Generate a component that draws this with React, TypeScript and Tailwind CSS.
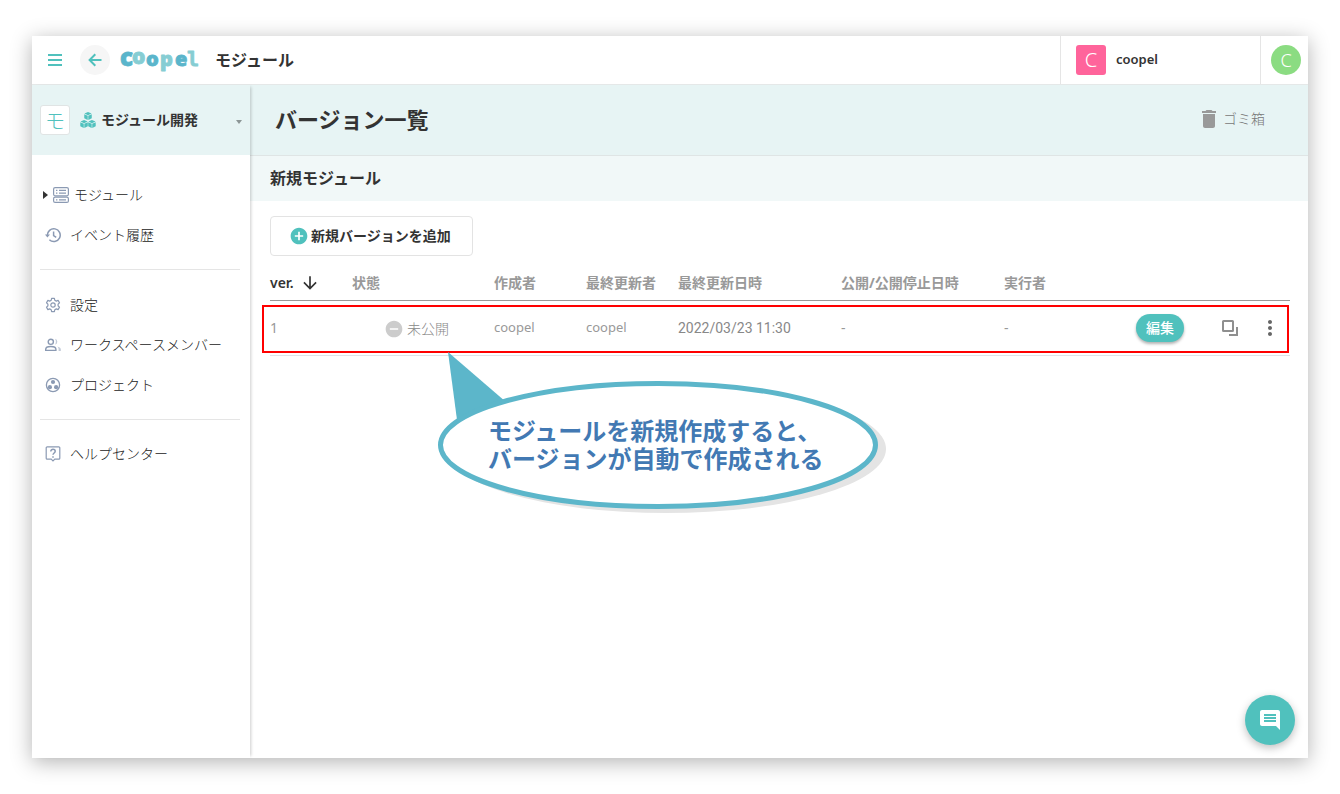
import type { ReactNode } from "react";
import { MdArrowDownward, MdDelete, MdAddCircle, MdRemoveCircle, MdMoreVert, MdComment } from "react-icons/md";

function CubesIcon() {
  const cube = (x: number, y: number) => (
    <g transform={`translate(${x} ${y})`}>
      <path d="M4 0 7.8 1.7 4 3.4.2 1.7Z" />
      <path d="M0 2.3 3.7 4v4.4L0 6.7Z" />
      <path d="M8 2.3 4.3 4v4.4L8 6.7Z" />
    </g>
  );
  return (
    <svg className="size-4 shrink-0 fill-[#50c1bd]" viewBox="0 0 17 17" aria-hidden="true">
      {cube(4.5, 0)}
      {cube(0.3, 8.5)}
      {cube(8.7, 8.5)}
    </svg>
  );
}

function Line({ children }: { children: ReactNode }) {
  return (
    <svg className="size-4 shrink-0" viewBox="0 0 16 16" fill="none" stroke="#8b9ab3" strokeWidth="1.2" aria-hidden="true">
      {children}
    </svg>
  );
}

const ModuleIcon = () => (
  <Line>
    <rect x=".6" y=".6" width="14.8" height="8.2" rx="1.5" />
    <rect x=".6" y="10.2" width="14.8" height="5.2" rx="1.5" />
    <path d="M3 3.4h1.4M6 3.4h7M3 6.2h1.4M6 6.2h7M3 12.8h1.4M6 12.8h7" />
  </Line>
);
const HistoryIcon = () => (
  <Line>
    <path d="M2.4 8.6a6.4 6.4 0 1 1 2 4.2M8.6 4.6v4l2.6 1.8" strokeWidth="1.5" />
    <path d="M0 7.4h5L2.4 10.6Z" fill="#8b9ab3" stroke="none" />
  </Line>
);
const GearIcon = () => (
  <Line>
    <circle cx="8" cy="8" r="2.2" />
    <path d="M6.6 1.4h2.8l.4 1.9 1.5.8 1.8-.7 1.4 2.4-1.4 1.3v1.8l1.4 1.3-1.4 2.4-1.8-.7-1.5.8-.4 1.9H6.6l-.4-1.9-1.5-.8-1.8.7-1.4-2.4 1.4-1.3V7.1L1.5 5.8l1.4-2.4 1.8.7 1.5-.8Z" strokeLinejoin="round" />
  </Line>
);
const MembersIcon = () => (
  <Line>
    <circle cx="5.8" cy="4.8" r="2.6" strokeWidth="1.4" />
    <path d="M.7 13.4v-1.2c0-1.8 2.4-2.7 5.1-2.7s5.1.9 5.1 2.7v1.2Z" strokeWidth="1.4" />
    <path d="M10 1.8a3.1 3.1 0 0 1 0 6c1.200-1.900 1.200-4.100 0-6ZM12.200 9.400c1.800.4 3.600 1.400 3.600 2.800v1.900h-2.200v-1.900c0-1.200-.4-2-1.400-2.800Z" fill="#c3cbd8" stroke="none" />
  </Line>
);
const ProjectIcon = () => (
  <Line>
    <circle cx="8" cy="8" r="6.6" strokeWidth="1.3" />
    <g fill="#8b9ab3" stroke="none">
      <circle cx="8" cy="5" r="2.1" />
      <circle cx="4.9" cy="10.2" r="2.1" />
      <circle cx="11.1" cy="10.2" r="2.1" />
    </g>
  </Line>
);
const HelpIcon = () => (
  <Line>
    <path d="M2.2.8h11.600a1 1 0 0 1 1 1v10.400a1 1 0 0 1-1 1h-4L8 15l-1.800-1.800h-4a1 1 0 0 1-1-1V1.800a1 1 0 0 1 1-1Z" />
    <path d="M5.800 5.400C5.800 4 6.800 3.300 8 3.300s2.200.8 2.200 2c0 1.700-2.200 1.700-2.200 3.500M8 10.200v1.500" strokeWidth="1.5" />
  </Line>
);

function NavItem({ icon, label }: { icon: ReactNode; label: string }) {
  return (
    <a href="#" className="flex h-10 items-center gap-[9px] pl-[5px]">
      {icon}
      {label}
    </a>
  );
}

function Sidebar() {
  return (
    <aside className="z-10 w-[218px] shrink-0 bg-white shadow-[3px_0_3px_-2px_rgba(0,0,0,0.2)]">
      <button className="flex h-[70px] w-full items-center bg-[#e7f4f4] px-2 text-left">
        <span className="flex size-[30px] items-center justify-center rounded-[3px] border border-[#e0e4e4] bg-white pt-1 text-xl font-light text-[#50c1bd]">モ</span>
        <span className="ml-2.5 flex items-center gap-[5px] text-sm font-bold">
          <CubesIcon />
          モジュール開発
        </span>
        <span className="mt-1 ml-auto border-x-[3px] border-t-4 border-x-transparent border-t-[#8c9696]" />
      </button>
      <nav className="pr-2.5 pl-2 text-sm font-light text-[#222]">
        <div className="border-b border-[#e5e5e5] pt-5 pb-3.5">
          <a href="#" className="flex h-10 items-center gap-[5px] pl-[3px]">
            <span className="border-y-4 border-l-[5px] border-y-transparent border-l-[#333]" />
            <ModuleIcon />
            モジュール
          </a>
          <NavItem icon={<HistoryIcon />} label="イベント履歴" />
        </div>
        <div className="border-b border-[#e5e5e5] pt-[15px] pb-3.5">
          <NavItem icon={<GearIcon />} label="設定" />
          <NavItem icon={<MembersIcon />} label="ワークスペースメンバー" />
          <NavItem icon={<ProjectIcon />} label="プロジェクト" />
        </div>
        <div className="pt-3.5">
          <NavItem icon={<HelpIcon />} label="ヘルプセンター" />
        </div>
      </nav>
    </aside>
  );
}

function Logo() {
  return (
    <svg className="h-10 w-20 overflow-visible" viewBox="0 0 80 40" fontFamily="'Open Sans', 'Noto Sans', sans-serif" fontWeight="800" fontSize="20" strokeWidth=".8" strokeLinejoin="round" role="img" aria-label="coopel">
      <g fill="#5ab5cb" stroke="#5ab5cb">
        <text x="0" y="26" fontSize="24">c</text>
        <text x="26" y="26">o</text>
        <text x="55" y="26">e</text>
      </g>
      <g fill="#86cdd3" stroke="#86cdd3">
        <text x="12" y="24" fontSize="21">o</text>
        <text x="40" y="26">p</text>
        <text x="67" y="26" fontFamily="'DejaVu Sans Mono', monospace" fontWeight="700">l</text>
      </g>
    </svg>
  );
}

function Header() {
  return (
    <header className="flex h-[49px] items-center border-b border-[#e5e8e8]">
      <button aria-label="メニュー" className="ml-[15px]">
        <svg className="size-4" viewBox="0 0 16 16" fill="#50c1bd" aria-hidden="true">
          <path d="M1 2h14v2H1zM1 7h14v2H1zM1 12h14v2H1z" />
        </svg>
      </button>
      <button aria-label="戻る" className="ml-[17px] flex size-[30px] items-center justify-center rounded-full bg-[#f6f6f6]">
        <svg className="size-4" viewBox="0 0 16 16" fill="none" stroke="#50c1bd" strokeWidth="2" aria-hidden="true">
          <path d="M14.500 8H3M8.300 2.300 2.600 8l5.700 5.700" />
        </svg>
      </button>
      <a href="#" className="ml-2.5">
        <Logo />
      </a>
      <span className="ml-[15px] text-base font-bold">モジュール</span>
      <button className="ml-auto flex h-12 w-[201px] items-center gap-2.5 border-x border-[#e5e5e5] pl-[15px]">
        <span className="flex size-[30px] items-center justify-center rounded-[3px] bg-[#ff649b] text-xl font-light text-white">C</span>
        <span className="text-[13px] font-semibold">coopel</span>
      </button>
      <button className="mr-[7px] ml-2.5 flex size-[30px] items-center justify-center rounded-full bg-[#8bdc82] text-lg font-light text-white">C</button>
    </header>
  );
}

function Callout() {
  return (
    <div className="pointer-events-none absolute top-[86px] left-[168px] h-[162px] w-[450px]">
      <svg className="absolute inset-0" width="450" height="162" viewBox="0 0 450 162" aria-hidden="true">
        <ellipse cx="228" cy="97" rx="220" ry="64" fill="#e4e4e4" />
        <path d="M10 0 68 50 40 70 19 68Z" fill="#5cb6ca" />
        <ellipse cx="220" cy="93" rx="217.500" ry="61.500" fill="#fff" stroke="#5cb6ca" strokeWidth="5" />
      </svg>
      <p className="relative pt-[66px] pl-[50px] font-['Liberation_Sans','Noto_Sans_CJK_JP',sans-serif] text-2xl leading-7 font-bold whitespace-nowrap text-[#4279b3]">
        モジュールを新規作成すると、
        <br />
        バージョンが自動で作成される
      </p>
    </div>
  );
}

function VersionTable() {
  return (
    <div className="relative">
      <table className="w-full table-fixed text-left text-sm text-[#999]">
        <colgroup>
          <col className="w-[82px]" />
          <col className="w-[142px]" />
          <col className="w-[92px]" />
          <col className="w-[92px]" />
          <col className="w-[163px]" />
          <col className="w-[163px]" />
          <col className="w-[100px]" />
          <col />
        </colgroup>
        <thead>
          <tr className="h-[34px] border-b border-[#999]">
            <th className="p-0 text-[#333]">
              <button className="flex items-center gap-1.5">
                <span className="font-semibold">ver.</span>
                <MdArrowDownward className="size-5" />
              </button>
            </th>
            <th className="p-0">状態</th>
            <th className="p-0">作成者</th>
            <th className="p-0">最終更新者</th>
            <th className="p-0">最終更新日時</th>
            <th className="p-0">公開/公開停止日時</th>
            <th className="p-0">実行者</th>
            <th className="p-0" aria-label="操作" />
          </tr>
        </thead>
        <tbody>
          <tr className="h-[55px] border-b border-[#dfe3e8]">
            <td className="p-0">1</td>
            <td className="p-0">
              <span className="flex items-center gap-[3px] pt-0.5 pl-8 font-light text-[#888]">
                <MdRemoveCircle className="size-5 text-[#ccc]" />
                未公開
              </span>
            </td>
            <td className="p-0 text-[13px]">coopel</td>
            <td className="p-0 text-[13px]">coopel</td>
            <td className="p-0 font-['Roboto',sans-serif] text-[#888]">2022/03/23 11:30</td>
            <td className="p-0">-</td>
            <td className="p-0">-</td>
            <td className="p-0">
              <div className="flex items-center justify-end">
                <button className="h-7 w-12 rounded-full bg-[#50c1bd] font-medium text-white shadow-[0_2px_3px_rgba(0,0,0,0.3)]">編集</button>
                <button aria-label="複製" className="ml-[37px]">
                  <svg className="size-[18px]" viewBox="0 0 18 18" fill="none" stroke="#8f8f8f" strokeWidth="2" aria-hidden="true">
                    <rect x="2" y="2" width="10" height="10" rx=".5" />
                    <path d="M16 8v8H8" />
                  </svg>
                </button>
                <button aria-label="その他" className="mr-2 ml-[19px] text-[#666]">
                  <MdMoreVert className="size-6" />
                </button>
              </div>
            </td>
          </tr>
        </tbody>
      </table>
      <div className="pointer-events-none absolute right-px bottom-[3px] -left-2 h-12 border-2 border-[#ff0000]" />
      <Callout />
    </div>
  );
}

export default function App() {
  return (
    <div className="flex min-h-screen bg-white px-8 py-9 font-['Noto_Sans','Noto_Sans_CJK_JP',sans-serif] text-[#333]">
      <div className="relative flex flex-1 flex-col bg-white shadow-[0_4px_20px_rgba(0,0,0,0.3)]">
        <Header />
        <div className="flex flex-1">
          <Sidebar />
          <main className="min-w-0 flex-1">
            <div className="flex h-[71px] items-center justify-between border-b border-[#dfe5e5] bg-[#e7f4f4] pr-[43px] pb-0.5 pl-[25px]">
              <h1 className="text-[22px] leading-7 font-bold">バージョン一覧</h1>
              <button className="flex items-center gap-0.5 text-sm font-light text-[#777]">
                <MdDelete className="size-6 text-[#999]" />
                ゴミ箱
              </button>
            </div>
            <h2 className="flex h-[45px] items-center bg-[#f1f8f8] pb-0.5 pl-5 text-base font-bold">新規モジュール</h2>
            <div className="pt-[15px] pr-[18px] pl-5">
              <button className="mb-2.5 flex h-10 items-center rounded border border-[#e3e3e3] pr-[21px] pl-[18px] text-sm font-bold">
                <MdAddCircle className="size-5 text-[#50c1bd]" />
                <span className="pl-0.5">新規バージョンを追加</span>
              </button>
              <VersionTable />
            </div>
          </main>
        </div>
        <button aria-label="チャット" className="absolute right-[13px] bottom-[13px] z-20 flex size-[50px] items-center justify-center rounded-full bg-[#50c1bd] text-white shadow-[0_3px_8px_rgba(0,0,0,0.25)]">
          <MdComment className="size-6" />
        </button>
      </div>
    </div>
  );
}
